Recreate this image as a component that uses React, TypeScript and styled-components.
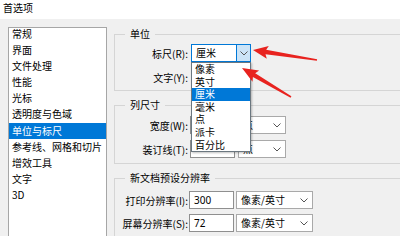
import React from 'react'
import styled, { createGlobalStyle } from 'styled-components'

const GlobalStyle = createGlobalStyle`
  html, body {
    margin: 0;
    padding: 0;
  }
  body {
    font-family: "Noto Sans CJK SC", "Noto Sans", sans-serif;
    font-size: 10px;
    color: #000;
  }
`

const categories = [
  '常规', '界面', '文件处理', '性能', '光标', '透明度与色域',
  '单位与标尺', '参考线、网格和切片', '增效工具', '文字', '3D',
]

const rulerUnits = ['像素', '英寸', '厘米', '毫米', '点', '派卡', '百分比']

type Pt = { x: number; y: number }

// tapered red annotation arrow, tail -> tip
const arrowPoints = (tail: Pt, tip: Pt, headLen: number, headHalf: number, neck: number, tailW: number) => {
  const dx = tip.x - tail.x
  const dy = tip.y - tail.y
  const len = Math.hypot(dx, dy)
  const ux = dx / len
  const uy = dy / len
  const nx = -uy
  const ny = ux
  const bx = tip.x - ux * headLen
  const by = tip.y - uy * headLen
  const pts = [
    [tip.x, tip.y],
    [bx + nx * headHalf, by + ny * headHalf],
    [bx + nx * neck + ux * 2, by + ny * neck + uy * 2],
    [tail.x + nx * tailW, tail.y + ny * tailW],
    [tail.x - nx * tailW, tail.y - ny * tailW],
    [bx - nx * neck + ux * 2, by - ny * neck + uy * 2],
    [bx - nx * headHalf, by - ny * headHalf],
  ]
  return pts.map(p => p.map(v => v.toFixed(1)).join(',')).join(' ')
}

const Chevron = () => (
  <svg width="8" height="5" viewBox="0 0 8 5">
    <polyline points="0.5,0.5 4,4 7.5,0.5" fill="none" stroke="#555" strokeWidth="1" />
  </svg>
)

export default function App() {
  return (
    <Window>
      <GlobalStyle />
      <TitleBar>首选项</TitleBar>
      <Body>
        <CategoryList>
          <CategoryItems>
            {categories.map(c => (
              <Category key={c} selected={c === '单位与标尺'}>{c}</Category>
            ))}
          </CategoryItems>
        </CategoryList>

        <Panel>
          <Group>
            <Legend>单位</Legend>
            <GroupBody gap={6} pad="3px 0 4px">
              <Row gap={4}>
                <Label>标尺(R):</Label>
                <ComboWrap>
                  <Combo width={60} focused>
                    <ComboText>厘米</ComboText>
                    <DropButton><Chevron /></DropButton>
                  </Combo>
                  <DropList>
                    {rulerUnits.map(u => (
                      <DropItem key={u} selected={u === '厘米'}>{u}</DropItem>
                    ))}
                  </DropList>
                </ComboWrap>
              </Row>
              <Row gap={4}>
                <Label>文字(Y):</Label>
                {/* covered by the open list above */}
                <Combo width={60}>
                  <ComboText />
                  <ChevronSlot><Chevron /></ChevronSlot>
                </Combo>
              </Row>
            </GroupBody>
          </Group>

          <Group>
            <Legend>列尺寸</Legend>
            <GroupBody gap={6} pad="4px 0 5px">
              <Row gap={3}>
                <Label>宽度(W):</Label>
                <TextField width={45} />
                <Combo width={48}>
                  <ComboText>点</ComboText>
                  <ChevronSlot><Chevron /></ChevronSlot>
                </Combo>
              </Row>
              <Row gap={3}>
                <Label>装订线(T):</Label>
                <TextField width={45} />
                <Combo width={48}>
                  <ComboText>点</ComboText>
                  <ChevronSlot><Chevron /></ChevronSlot>
                </Combo>
              </Row>
            </GroupBody>
          </Group>

          <Group tall>
            <Legend>新文档预设分辨率</Legend>
            <GroupBody gap={5} pad="6px 0 6px">
              <Row gap={2}>
                <Label>打印分辨率(I):</Label>
                <TextField width={45}>300</TextField>
                <Combo width={77}>
                  <ComboText>像素/英寸</ComboText>
                  <ChevronSlot><Chevron /></ChevronSlot>
                </Combo>
              </Row>
              <Row gap={2}>
                <Label>屏幕分辨率(S):</Label>
                <TextField width={45}>72</TextField>
                <Combo width={77}>
                  <ComboText>像素/英寸</ComboText>
                  <ChevronSlot><Chevron /></ChevronSlot>
                </Combo>
              </Row>
            </GroupBody>
          </Group>
        </Panel>
      </Body>

      <Annotations width="400" height="236" viewBox="0 0 400 236">
        <polygon fill="#e8231f" points={arrowPoints({ x: 317, y: 60 }, { x: 253, y: 50 }, 15, 6.5, 2.2, 0.8)} />
        <polygon fill="#e8231f" points={arrowPoints({ x: 291, y: 97 }, { x: 242, y: 68 }, 16, 6.5, 2.2, 0.8)} />
      </Annotations>
    </Window>
  )
}

const Window = styled.div`
  position: relative;
  width: 400px;
  height: 236px;
  overflow: hidden;
  background: #f0f0f0;
  display: flex;
  flex-direction: column;
`

const TitleBar = styled.div`
  height: 19px;
  flex-shrink: 0;
  background: #fff;
  padding: 1px 0 0 3px;
  line-height: 14px;
  box-sizing: border-box;
`

const Body = styled.div`
  flex: 1;
  display: flex;
  padding: 8px 0 0 8px;
  gap: 7px;
  min-height: 0;
`

const CategoryList = styled.div`
  width: 99px;
  flex-shrink: 0;
  background: #fff;
  border: 1px solid #a6a6a6;
  border-bottom: none;
  box-sizing: border-box;
  overflow: hidden;
`

const CategoryItems = styled.div`
  margin-top: -2px;
`

const Category = styled.div<{ selected?: boolean }>`
  height: 16.1px;
  line-height: 16px;
  padding-left: 3px;
  white-space: nowrap;
  background: ${p => (p.selected ? '#0078d7' : 'transparent')};
  color: ${p => (p.selected ? '#fff' : '#000')};
`

const Panel = styled.div`
  width: 400px;
  flex-shrink: 0;
  display: flex;
  flex-direction: column;
  gap: 7px;
`

const Group = styled.fieldset<{ tall?: boolean }>`
  margin: 0;
  padding: 0;
  border: 1px solid #d5d5d5;
  min-width: 0;
  ${p => (p.tall ? 'flex: 1; border-bottom: none;' : '')}
`

const Legend = styled.legend`
  margin-left: 10px;
  padding: 0 5px;
  line-height: 14px;
  font-size: 10px;
`

const GroupBody = styled.div<{ gap: number; pad: string }>`
  display: flex;
  flex-direction: column;
  gap: ${p => p.gap}px;
  padding: ${p => p.pad};
`

const Row = styled.div<{ gap: number }>`
  display: flex;
  align-items: center;
  height: 18px;
  gap: ${p => p.gap}px;
`

const Label = styled.span`
  width: 73px;
  text-align: right;
  white-space: nowrap;
  margin-right: -1px;
`

const TextField = styled.div<{ width: number }>`
  width: ${p => p.width}px;
  height: 18px;
  box-sizing: border-box;
  background: #fff;
  border: 1px solid #8f8f8f;
  padding-left: 4px;
  line-height: 16px;
  font-family: "Noto Sans", "Noto Sans CJK SC", sans-serif;
`

const ComboWrap = styled.div`
  position: relative;
  display: flex;
`

const Combo = styled.div<{ width: number; focused?: boolean }>`
  width: ${p => p.width}px;
  height: 18px;
  box-sizing: border-box;
  background: #fff;
  border: 1px solid ${p => (p.focused ? '#0078d7' : '#a9a9a9')};
  display: flex;
  align-items: stretch;
`

const ComboText = styled.span`
  flex: 1;
  padding-left: 4px;
  line-height: 16px;
  white-space: nowrap;
  overflow: hidden;
`

const DropButton = styled.span`
  width: 13px;
  background: #cce4f7;
  border-left: 1px solid #0078d7;
  display: flex;
  align-items: center;
  justify-content: center;
`

const ChevronSlot = styled.span`
  width: 15px;
  display: flex;
  align-items: center;
  justify-content: center;
  padding-right: 1px;
`

const DropList = styled.div`
  position: absolute;
  top: 100%;
  left: 0;
  width: 60px;
  box-sizing: border-box;
  background: #fff;
  border: 1px solid #6b7780;
  box-shadow: 1px 1px 2px rgba(0, 0, 0, 0.25);
  z-index: 2;
`

const DropItem = styled.div<{ selected?: boolean }>`
  height: 12.6px;
  line-height: 12.6px;
  padding-left: 3px;
  white-space: nowrap;
  background: ${p => (p.selected ? '#0078d7' : 'transparent')};
  color: ${p => (p.selected ? '#fff' : '#000')};
`

const Annotations = styled.svg`
  position: absolute;
  left: 0;
  top: 0;
  pointer-events: none;
  z-index: 5;
`
